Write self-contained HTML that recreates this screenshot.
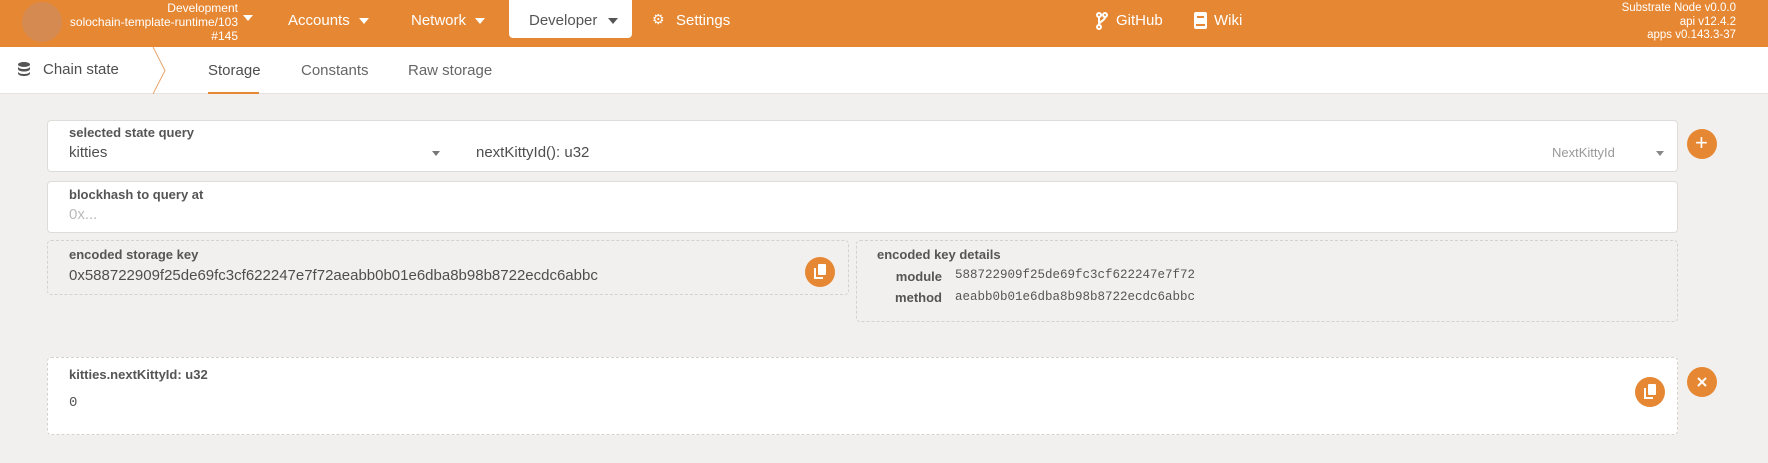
<!DOCTYPE html>
<html><head><meta charset="utf-8"><style>
*{box-sizing:border-box;margin:0;padding:0}
body{width:1768px;height:463px;background:#f2f0ee;font-family:"Liberation Sans",sans-serif;position:relative;overflow:hidden;color:#4e4e4e}
.a{position:absolute;white-space:nowrap}
.hdr{position:absolute;left:0;top:0;width:1768px;height:47px;background:#e68833}
.w{color:#fff}
.sub{position:absolute;left:0;top:47px;width:1768px;height:47px;background:#fff;border-bottom:1px solid #e6e4e1}
.box{position:absolute;background:#fff;border:1px solid #dedcd9;border-radius:4px}
.dash{position:absolute;border:1px dashed #d4d2cf;border-radius:4px}
.lbl{font-size:13px;font-weight:bold;color:#555}
.val{font-size:15px;color:#4e4e4e}
.btn{position:absolute;width:30px;height:30px;border-radius:50%;background:#e68833}
.mono{font-family:"Liberation Mono",monospace}
.caret{display:inline-block;width:0;height:0;border-left:5px solid transparent;border-right:5px solid transparent;border-top:6px solid #fff;vertical-align:middle;margin-left:9px}
</style></head><body>
<div class="hdr"></div>
<div class="a" style="left:22px;top:2px;width:40px;height:40px;border-radius:50%;background:#d48a50"></div>
<div class="a w" style="right:1530px;top:1px;font-size:12px;text-align:right;line-height:14px">Development<br>solochain-template-runtime/103<br>#145</div>
<div class="a" style="left:243px;top:15px;border-left:5px solid transparent;border-right:5px solid transparent;border-top:6px solid #fff"></div>
<div class="a w" style="left:288px;top:12px;font-size:15px">Accounts<span class="caret"></span></div>
<div class="a w" style="left:411px;top:12px;font-size:15px">Network<span class="caret"></span></div>
<div class="a" style="left:509px;top:0;width:123px;height:38px;background:#fff;border-radius:0 0 4px 4px"></div>
<div class="a" style="left:529px;top:12px;font-size:15px;color:#555">Developer<span class="caret" style="border-top-color:#555;margin-left:11px"></span></div>
<div class="a w" style="left:652px;top:11px;font-size:14px">⚙</div>
<div class="a w" style="left:676px;top:12px;font-size:15px">Settings</div>
<svg class="a" style="left:1096px;top:12px" width="12" height="18" viewBox="0 0 12 18"><g fill="none" stroke="#fff" stroke-width="2"><circle cx="3" cy="3" r="2"/><circle cx="9" cy="3" r="2"/><circle cx="3" cy="15" r="2"/><path d="M3 5v8M9 5c0 4-6 4-6 8"/></g></svg>
<div class="a w" style="left:1116px;top:12px;font-size:15px">GitHub</div>
<svg class="a" style="left:1194px;top:12px" width="13" height="17" viewBox="0 0 13 17"><rect x="0" y="0" width="13" height="17" rx="2" fill="#fff"/><rect x="3" y="4" width="7" height="2" fill="#e68833"/><rect x="2" y="12" width="9" height="2" fill="#e68833"/></svg>
<div class="a w" style="left:1214px;top:12px;font-size:15px">Wiki</div>
<div class="a w" style="right:32px;top:2px;font-size:11.5px;text-align:right;line-height:13.5px">Substrate Node v0.0.0<br>api v12.4.2<br>apps v0.143.3-37</div>

<div class="sub"></div>
<svg class="a" style="left:18px;top:62px" width="12" height="14" viewBox="0 0 12 14"><g fill="#555"><ellipse cx="6" cy="2.5" rx="6" ry="2.5"/><path d="M0 4.5c0 1.5 3 2.5 6 2.5s6-1 6-2.5V7c0 1.5-3 2.5-6 2.5S0 8.5 0 7z"/><path d="M0 9.5c0 1.5 3 2.5 6 2.5s6-1 6-2.5V11.5c0 1.5-3 2.5-6 2.5S0 13 0 11.5z"/></g></svg>
<div class="a" style="left:43px;top:61px;font-size:15px;color:#4e4e4e">Chain state</div>
<svg class="a" style="left:150px;top:47px" width="20" height="47"><path d="M3 0L15 23.5L3 47" fill="none" stroke="#e8a56c" stroke-width="1"/></svg>
<div class="a" style="left:208px;top:62px;font-size:15px;color:#4e4e4e">Storage</div>
<div class="a" style="left:208px;top:92px;width:51px;height:2px;background:#e68833"></div>
<div class="a" style="left:301px;top:62px;font-size:15px;color:#666">Constants</div>
<div class="a" style="left:408px;top:62px;font-size:15px;color:#666">Raw storage</div>

<div class="box" style="left:47px;top:120px;width:1631px;height:52px"></div>
<div class="a lbl" style="left:69px;top:125px">selected state query</div>
<div class="a val" style="left:69px;top:144px">kitties</div>
<div class="a" style="left:432px;top:151px;border-left:4px solid transparent;border-right:4px solid transparent;border-top:5px solid #777"></div>
<div class="a val" style="left:476px;top:144px">nextKittyId(): u32</div>
<div class="a" style="left:1552px;top:145px;font-size:13px;color:#999">NextKittyId</div>
<div class="a" style="left:1656px;top:151px;border-left:4px solid transparent;border-right:4px solid transparent;border-top:5px solid #888"></div>
<div class="btn" style="left:1687px;top:129px"></div>
<div class="a" style="left:1695px;top:128px;font-size:22px;color:#fff;line-height:30px">+</div>

<div class="box" style="left:47px;top:181px;width:1631px;height:52px"></div>
<div class="a lbl" style="left:69px;top:187px">blockhash to query at</div>
<div class="a val" style="left:69px;top:206px;color:#bbb">0x...</div>

<div class="dash" style="left:47px;top:240px;width:802px;height:55px"></div>
<div class="a lbl" style="left:69px;top:247px">encoded storage key</div>
<div class="a val" style="left:69px;top:267px">0x588722909f25de69fc3cf622247e7f72aeabb0b01e6dba8b98b8722ecdc6abbc</div>
<div class="btn" style="left:805px;top:257px"></div>
<svg class="a" style="left:813px;top:264px" width="14" height="16" viewBox="0 0 14 16"><rect x="5" y="0" width="8" height="11" rx="1" fill="#fff"/><path d="M2 4v10h8" fill="none" stroke="#fff" stroke-width="2"/></svg>

<div class="dash" style="left:856px;top:240px;width:822px;height:82px"></div>
<div class="a lbl" style="left:877px;top:247px">encoded key details</div>
<div class="a lbl" style="left:880px;top:269px;width:62px;text-align:right">module</div>
<div class="a mono" style="left:955px;top:268px;font-size:12.5px;color:#555">588722909f25de69fc3cf622247e7f72</div>
<div class="a lbl" style="left:880px;top:290px;width:62px;text-align:right">method</div>
<div class="a mono" style="left:955px;top:290px;font-size:12.5px;color:#555">aeabb0b01e6dba8b98b8722ecdc6abbc</div>

<div class="dash" style="left:47px;top:357px;width:1631px;height:78px;background:#fff"></div>
<div class="a lbl" style="left:69px;top:367px">kitties.nextKittyId: u32</div>
<div class="a mono" style="left:69px;top:395px;font-size:14px;color:#555">0</div>
<div class="btn" style="left:1635px;top:377px"></div>
<svg class="a" style="left:1643px;top:384px" width="14" height="16" viewBox="0 0 14 16"><rect x="5" y="0" width="8" height="11" rx="1" fill="#fff"/><path d="M2 4v10h8" fill="none" stroke="#fff" stroke-width="2"/></svg>
<div class="btn" style="left:1687px;top:367px"></div>
<svg class="a" style="left:1697px;top:377px" width="10" height="10"><path d="M1 1L9 9M9 1L1 9" stroke="#fff" stroke-width="2"/></svg>
</body></html>
